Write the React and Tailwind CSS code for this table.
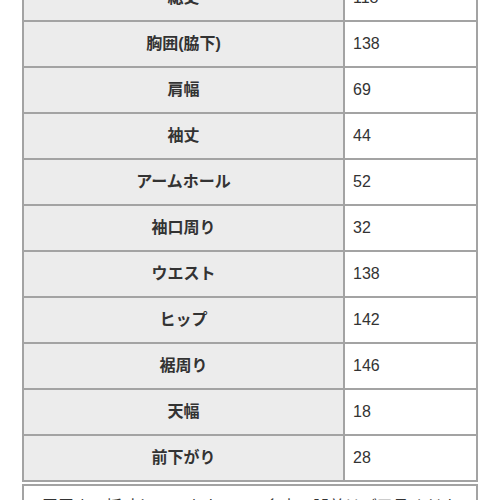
const rows = [
  ['総丈', '118'],
  ['胸囲(脇下)', '138'],
  ['肩幅', '69'],
  ['袖丈', '44'],
  ['アームホール', '52'],
  ['袖口周り', '32'],
  ['ウエスト', '138'],
  ['ヒップ', '142'],
  ['裾周り', '146'],
  ['天幅', '18'],
  ['前下がり', '28'],
];

export default function App() {
  return (
    <div
      className="w-[500px] h-[500px] overflow-hidden bg-white text-[#333]"
      style={{ fontFamily: '"Liberation Sans", "Noto Sans CJK JP", sans-serif' }}
    >
      <div className="ml-[22px] w-[456px] -mt-[26px]">
        <table className="w-full border-collapse">
          <tbody>
            {rows.map(([label, value]) => (
              <tr key={label} className="h-[46px]">
                <th className="w-[321px] border-2 border-[#a3a3a3] bg-[#ececec] text-center text-[16px] font-bold">
                  {label}
                </th>
                <td className="border-2 border-[#a3a3a3] bg-white pl-[8px] text-left text-[16px]">
                  {value}
                </td>
              </tr>
            ))}
          </tbody>
        </table>
        <div className="mt-[2px] border-2 border-[#a3a3a3] px-[18px] pt-[9px] pb-4 text-[16px]">
          平置きで採寸していますので、多少の誤差はご了承ください。
        </div>
      </div>
    </div>
  );
}
